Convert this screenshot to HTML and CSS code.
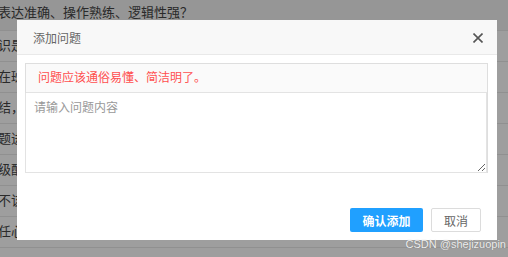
FILE: index.html
```html
<!DOCTYPE html>
<html lang="zh-CN">

<head>
    <meta charset="UTF-8">
    <title>添加问题</title>
    <link rel="stylesheet" href="styles.css">
</head>

<body>
    <!-- 背后的问题列表 -->
    <div class="table">
        <div class="row first">表达准确、操作熟练、逻辑性强？</div>
        <div class="row">识是</div>
        <div class="row">在班</div>
        <div class="row">结，</div>
        <div class="row">题进</div>
        <div class="row">级酌</div>
        <div class="row">不该</div>
        <div class="row">任心</div>
        <div class="row"></div>
    </div>
    <div class="mask"></div>

    <div class="dialog">
        <div class="dialog-header">
            <span class="dialog-title">添加问题</span>
            <span class="close">
                <svg width="10" height="10" viewBox="0 0 10 10">
                    <path d="M0.5 0.5 L9.5 9.5 M9.5 0.5 L0.5 9.5" stroke="#555" stroke-width="1.6" fill="none"/>
                </svg>
            </span>
        </div>
        <div class="dialog-body">
            <div class="question-box">
                <div class="tip">问题应该通俗易懂、简洁明了。</div>
                <textarea class="question-input" placeholder="请输入问题内容"></textarea>
            </div>
        </div>
        <div class="dialog-footer">
            <button class="btn btn-primary">确认添加</button>
            <button class="btn btn-default">取消</button>
        </div>
    </div>

    <div class="watermark">CSDN @shejizuopin</div>
</body>

</html>
```

FILE: styles.css
```css
body {
    margin: 0;
    width: 508px;
    height: 257px;
    overflow: hidden;
    background: #fff;
    font-family: "Liberation Sans", "Noto Sans CJK SC", sans-serif;
    font-size: 12px;
    position: relative;
}

/* 背景表格 */
.table {
    margin-left: -2px;
    height: 257px;
    overflow: hidden;
}

.table .row {
    height: 30px;
    line-height: 30px;
    border-bottom: 1px solid #e8e8e8;
    color: #444;
    font-size: 13px;
    white-space: nowrap;
}

.table .row.first {
    height: 26px;
    line-height: 26px;
    padding-bottom: 4px;
    background: #f2f2f2;
}

.mask {
    position: absolute;
    top: 0;
    left: 0;
    right: 0;
    bottom: 0;
    background: rgba(0, 0, 0, 0.38);
}

/* 弹窗 */
.dialog {
    position: absolute;
    left: 17px;
    top: 20px;
    width: 480px;
    height: 220px;
    background: #fff;
    display: flex;
    flex-direction: column;
}

.dialog-header {
    height: 34px;
    background: #f8f8f8;
    border-bottom: 1px solid #e9e9e9;
    display: flex;
    align-items: center;
    justify-content: space-between;
    padding: 0 14px 0 16px;
}

.dialog-title {
    color: #666;
    font-size: 12px;
    margin-top: 1px;
}

.close {
    display: flex;
    margin-top: 2px;
}

.dialog-body {
    padding: 8px 9px 0 8px;
}

.question-box {
    border: 1px solid #dedede;
    border-bottom: none;
}

.tip {
    height: 28px;
    line-height: 28px;
    background: #fafafa;
    border-bottom: 1px solid #e3e3e3;
    color: #ff4f4f;
    padding-left: 12px;
}

.question-input {
    display: block;
    box-sizing: border-box;
    width: calc(100% + 1px);
    margin-left: -1px;
    height: 80px;
    border: 1px solid #e3e3e3;
    border-top: none;
    padding: 5px 8px;
    font-family: "Liberation Sans", "Noto Sans CJK SC", sans-serif;
    font-size: 12px;
    color: #333;
    outline: none;
    resize: vertical;
}

.question-input::placeholder {
    color: #999;
}

.dialog-footer {
    margin-top: auto;
    display: flex;
    justify-content: flex-end;
    gap: 8px;
    padding: 0 16px 8px 0;
}

.btn {
    height: 24px;
    padding: 0;
    font-family: "Liberation Sans", "Noto Sans CJK SC", sans-serif;
    font-size: 12px;
    border-radius: 2px;
    cursor: pointer;
}

.btn-primary {
    width: 73px;
    background: #20a0ff;
    border: none;
    color: #fff;
    font-weight: bold;
}

.btn-default {
    width: 50px;
    background: #fff;
    border: 1px solid #dcdcdc;
    color: #666;
}

.watermark {
    position: absolute;
    right: 2px;
    top: 238px;
    font-size: 11px;
    color: #eee;
    text-shadow: 0 0 1px rgba(0, 0, 0, 0.3);
}
```
